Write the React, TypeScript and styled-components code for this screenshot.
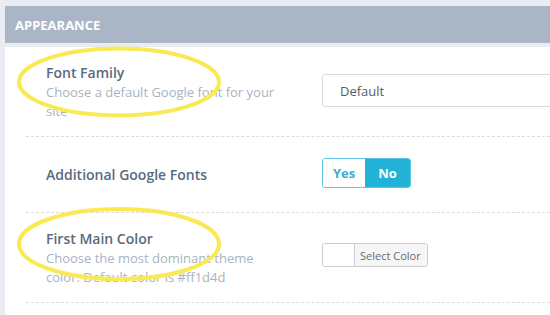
import styled, { createGlobalStyle } from 'styled-components'

const GlobalStyle = createGlobalStyle`
  html, body {
    margin: 0;
    padding: 0;
    overflow: hidden;
    background: #e9edf2;
    font-family: "Open Sans", "Liberation Sans", sans-serif;
  }
`

const Page = styled.div`
  position: relative;
  width: 550px;
  height: 315px;
  padding: 6px 0 0 5px;
  box-sizing: border-box;
  overflow: hidden;
`

const Panel = styled.section`
  width: 620px;
  display: flex;
  flex-direction: column;
  gap: 4px;
`

const PanelHeader = styled.header`
  height: 37px;
  background: #aab5c5;
  color: #ffffff;
  font-size: 13px;
  font-weight: 700;
  text-transform: uppercase;
  display: flex;
  align-items: center;
  padding-left: 10px;
`

const PanelBody = styled.div`
  background: #ffffff;
  padding-left: 21px;
  min-height: 280px;
`

const Row = styled.div`
  display: grid;
  grid-template-columns: 240px 1fr;
  column-gap: 36px;
  align-items: center;
  min-height: 44px;
  padding: 16px 0 15px 20px;
  border-bottom: 1px dashed #dcdcdc;
`

const Label = styled.div`
  font-size: 14px;
  font-weight: 600;
  line-height: 20px;
  color: #5a6a7e;
`

const Hint = styled.div`
  font-size: 13px;
  line-height: 19px;
  color: #a9b3c1;
`

const SelectBox = styled.div`
  height: 33px;
  width: 300px;
  box-sizing: border-box;
  border: 1px solid #dadada;
  border-radius: 3px;
  display: flex;
  align-items: center;
  padding-left: 17px;
  font-size: 13px;
  color: #555d66;
  margin-bottom: 3px;
`

const Toggle = styled.div`
  display: inline-flex;
  width: 89px;
  height: 30px;
  box-sizing: border-box;
  border: 1px solid #5cc6e4;
  border-radius: 3px;
  overflow: hidden;
  margin-bottom: 4px;
  justify-self: start;
`

const ToggleOption = styled.span<{ $active?: boolean; $w: number }>`
  width: ${({ $w }) => $w}px;
  display: flex;
  align-items: center;
  justify-content: center;
  font-size: 13px;
  font-weight: 700;
  background: ${({ $active }) => ($active ? '#22b2d7' : '#ffffff')};
  color: ${({ $active }) => ($active ? '#ffffff' : '#3aadd3')};
`

const ColorPicker = styled.div`
  display: inline-flex;
  height: 24px;
  box-sizing: border-box;
  border: 1px solid #cccccc;
  border-radius: 3px;
  overflow: hidden;
  margin-bottom: 6px;
  justify-self: start;
`

const Swatch = styled.span`
  width: 31px;
  background: #ffffff;
  border-right: 1px solid #cccccc;
`

const PickerLabel = styled.span`
  display: flex;
  align-items: center;
  padding: 0 6px 0 5px;
  background: #f6f6f6;
  font-size: 11px;
  color: #666c73;
`

const Marks = styled.svg`
  position: absolute;
  left: 0;
  top: 0;
  pointer-events: none;
`

export default function App() {
  return (
    <Page>
      <GlobalStyle />
      <Panel>
        <PanelHeader>Appearance</PanelHeader>
        <PanelBody>
          <Row>
            <div>
              <Label>Font Family</Label>
              <Hint>Choose a default Google font for your site</Hint>
            </div>
            <SelectBox>Default</SelectBox>
          </Row>
          <Row>
            <Label>Additional Google Fonts</Label>
            <Toggle>
              <ToggleOption $w={43}>Yes</ToggleOption>
              <ToggleOption $w={46} $active>
                No
              </ToggleOption>
            </Toggle>
          </Row>
          <Row>
            <div>
              <Label>First Main Color</Label>
              <Hint>Choose the most dominant theme color. Default color is #ff1d4d</Hint>
            </div>
            <ColorPicker>
              <Swatch />
              <PickerLabel>Select Color</PickerLabel>
            </ColorPicker>
          </Row>
        </PanelBody>
      </Panel>
      <Marks width="550" height="315">
        <ellipse cx="119" cy="82" rx="100" ry="33.5" fill="none" stroke="#f9ea55" strokeWidth="4" />
        <ellipse cx="119" cy="244" rx="100" ry="35" fill="none" stroke="#f9ea55" strokeWidth="4" />
      </Marks>
    </Page>
  )
}
